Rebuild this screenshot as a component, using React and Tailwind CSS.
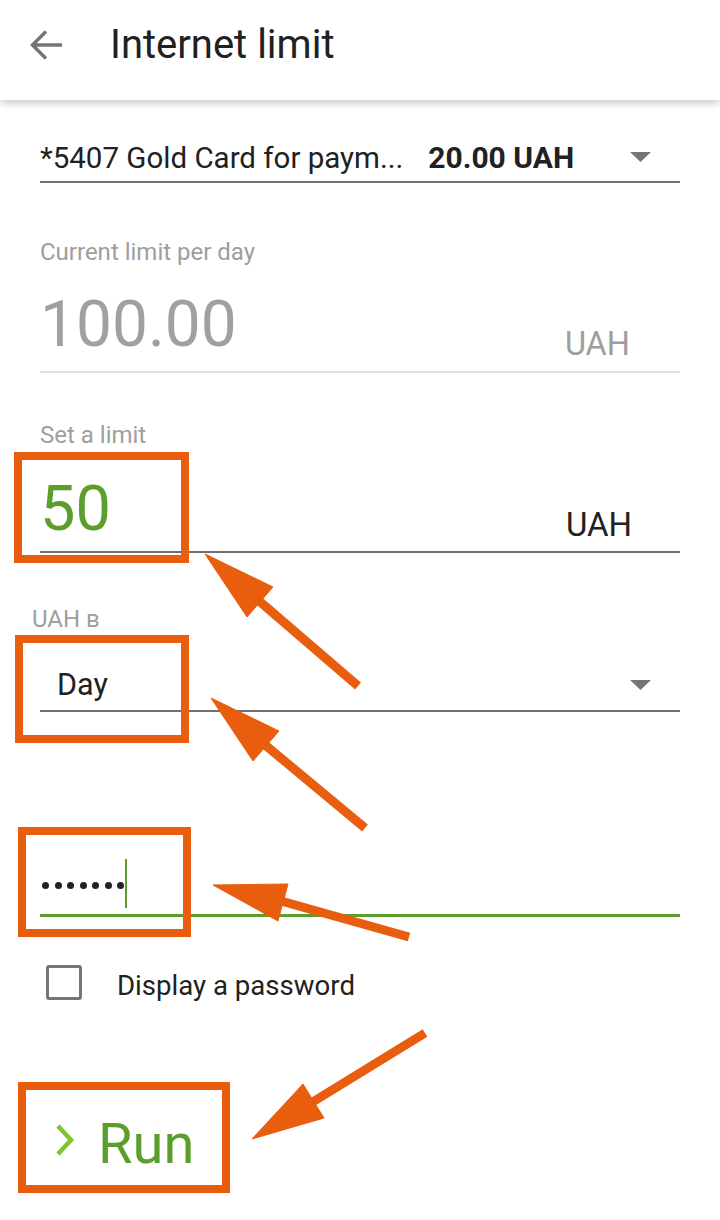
const GREEN = "text-[#5c9e2b]";

const Triangle = () => (
  <svg width="21" height="10" viewBox="0 0 21 10" className="shrink-0">
    <polygon points="0,0 21,0 10.5,10" fill="#757575" />
  </svg>
);

const Marker = ({ className }) => (
  <div className={`absolute border-[8px] border-[#e95d0f] ${className}`} />
);

const Arrows = () => (
  <svg
    className="absolute left-0 top-0 pointer-events-none"
    width="720"
    height="1220"
    viewBox="0 0 720 1220"
  >
    <g fill="#e95d0f" stroke="#e95d0f" strokeLinejoin="miter">
      <line x1="358" y1="686" x2="258" y2="600" strokeWidth="9" />
      <polygon points="205,554 247,617 273,587" strokeWidth="1" />

      <line x1="365" y1="828" x2="264" y2="744" strokeWidth="9" />
      <polygon points="211,698 253,761 279,731" strokeWidth="1" />

      <line x1="409" y1="937" x2="281" y2="901" strokeWidth="9" />
      <polygon points="213,885 288,884 278,921" strokeWidth="1" />

      <line x1="425" y1="1033" x2="311" y2="1103" strokeWidth="9" />
      <polygon points="252,1139 303,1084 324,1118" strokeWidth="1" />
    </g>
  </svg>
);

export default function App() {
  return (
    <div className="relative w-[720px] h-[1220px] bg-white overflow-hidden font-['Roboto',sans-serif] text-[#212121]">
      <header className="relative z-10 h-[100px] flex items-center bg-white shadow-[0_3px_8px_rgba(0,0,0,0.22)]">
        <svg width="34" height="32" viewBox="0 0 34 32" className="ml-[29px] mt-[-10px]">
          <path d="M33 16H4M17 2.5L3.5 16L17 29.5" fill="none" stroke="#757575" strokeWidth="3.5" />
        </svg>
        <h1 className="ml-[47px] mt-[-10px] text-[40px] leading-[48px] font-normal">Internet limit</h1>
      </header>

      <main className="px-[40px]">
        <div className="mt-[38px] h-[45px] flex items-center border-b-2 border-[#6f6f6f]">
          <span className="relative -top-[2px] text-[29.5px] leading-[40px] whitespace-nowrap">*5407 Gold Card for paym...</span>
          <span className="relative -top-[2px] ml-[25px] text-[30px] leading-[40px] font-bold whitespace-nowrap">20.00 UAH</span>
          <div className="ml-auto mr-[29px] mb-[6px]">
            <Triangle />
          </div>
        </div>

        <div className="mt-[56px] text-[24px] leading-[26px] text-[#9e9e9e]">Current limit per day</div>
        <div className="mt-[28px] flex items-end justify-between pb-[14px] border-b-2 border-[#e0e0e0]">
          <span className="text-[64px] leading-[64px] text-[#a0a0a0]">100.00</span>
          <span className="relative top-[2px] mr-[50px] text-[32.5px] leading-[30px] text-[#9e9e9e]">UAH</span>
        </div>

        <div className="mt-[49px] text-[24px] leading-[26px] text-[#9e9e9e]">Set a limit</div>
        <div className="mt-[29px] flex items-end justify-between pb-[11px] border-b-2 border-[#6f6f6f]">
          <span className={`text-[63px] leading-[63px] ${GREEN}`}>50</span>
          <span className="mr-[48px] text-[33px] leading-[30px]">UAH</span>
        </div>

        <div className="mt-[53px] -ml-[8px] text-[24px] leading-[26px] text-[#9e9e9e]">UAH в</div>
        <div className="mt-[37px] flex items-center justify-between pb-[9px] border-b-2 border-[#6f6f6f]">
          <span className="ml-[17px] text-[30.5px] leading-[32px]">Day</span>
          <div className="mr-[29px]">
            <Triangle />
          </div>
        </div>

        <div className="mt-[146px] h-[59px] flex border-b-[3px] border-[#5c9e2b]">
          <div className="flex items-center gap-[5.5px] ml-[2px] mt-[1px] h-[52px]">
            {[0, 1, 2, 3, 4, 5, 6].map((i) => (
              <span key={i} className="w-[7px] h-[7px] rounded-full bg-[#222]" />
            ))}
          </div>
          <span className="ml-[1px] mt-[1px] w-[2px] h-[49px] bg-[#5c9e2b]" />
        </div>

        <label className="mt-[48px] flex items-center h-[35px]">
          <span className="ml-[6px] w-[36px] h-[35px] rounded-[3px] border-[3px] border-[#757575]" />
          <span className="relative top-[3px] ml-[35px] text-[27.6px] leading-[35px]">Display a password</span>
        </label>

        <button className="mt-[114px] flex items-center h-[60px]">
          <svg width="20" height="32" viewBox="0 0 20 32" className="ml-[15px] mb-[8px]">
            <polyline points="3,2 16,16 3,30" fill="none" stroke="#7ec531" strokeWidth="4.5" />
          </svg>
          <span className={`ml-[23px] text-[56px] leading-[60px] ${GREEN}`}>Run</span>
        </button>
      </main>

      <Marker className="left-[14px] top-[452px] w-[175px] h-[111px]" />
      <Marker className="left-[15px] top-[635px] w-[174px] h-[108px]" />
      <Marker className="left-[18px] top-[827px] w-[173px] h-[110px]" />
      <Marker className="left-[18px] top-[1082px] w-[212px] h-[111px]" />
      <Arrows />
    </div>
  );
}
